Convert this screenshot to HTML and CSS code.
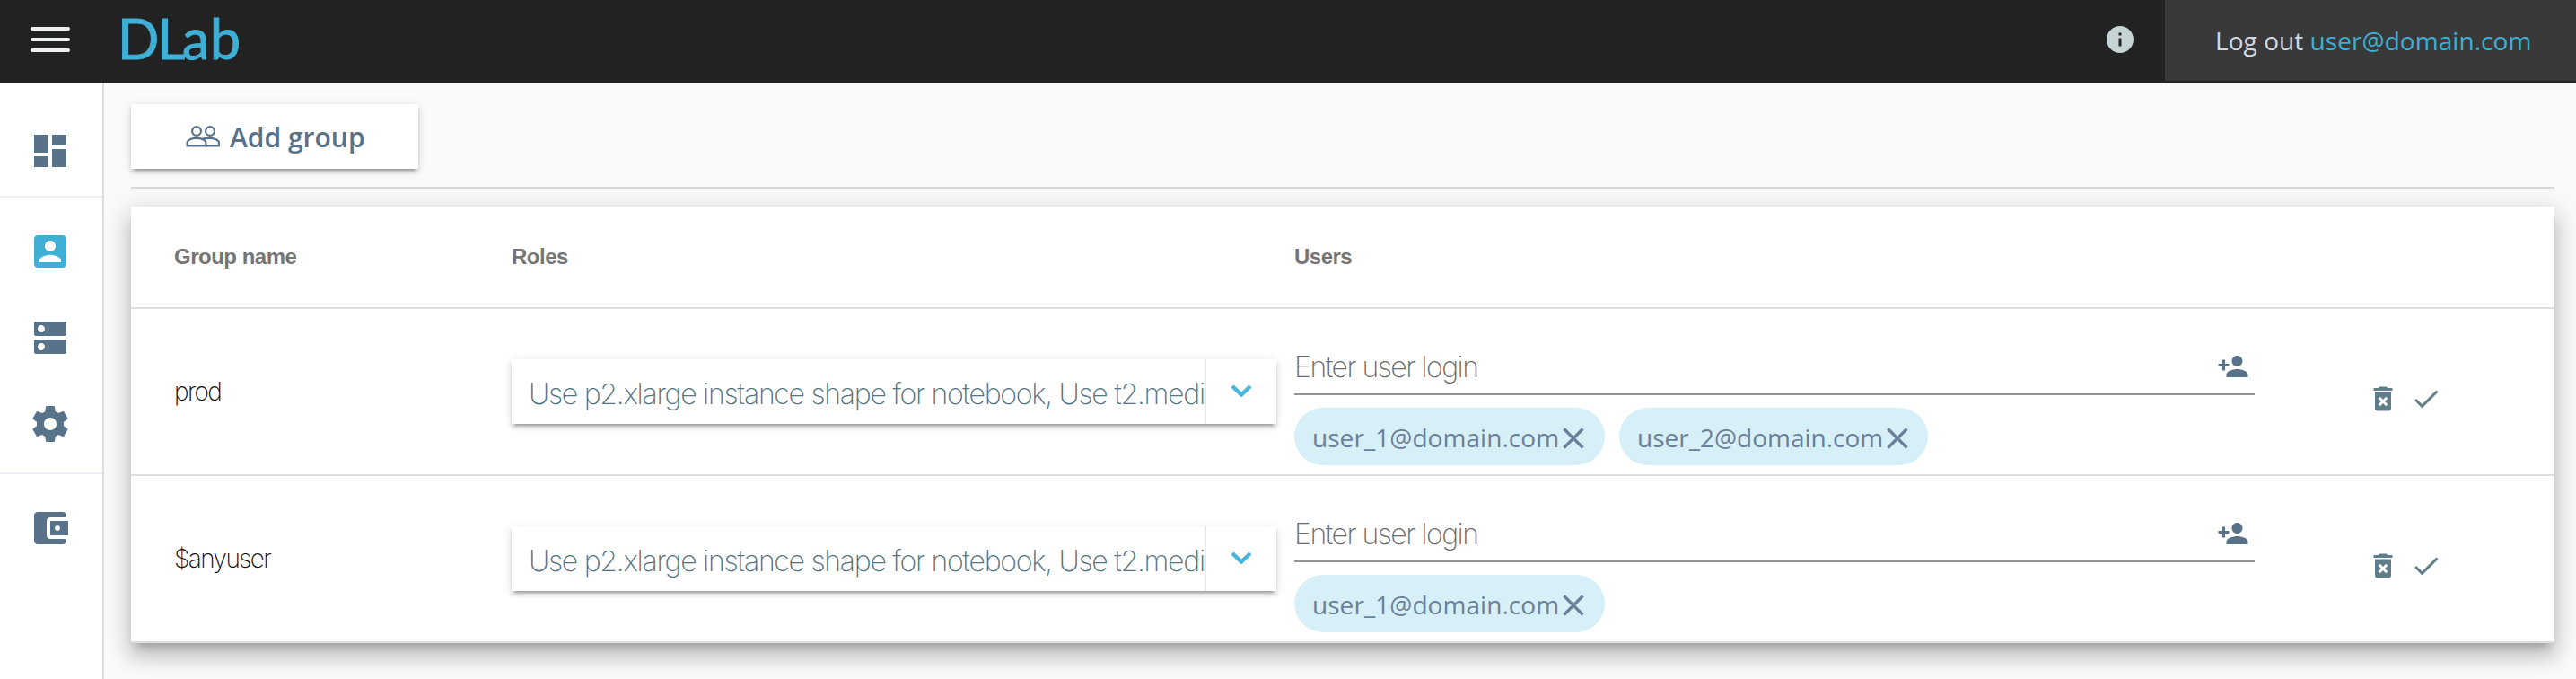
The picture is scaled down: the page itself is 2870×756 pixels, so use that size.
FILE: index.html
```html
<!DOCTYPE html>
<html lang="en">
<head>
<meta charset="utf-8">
<title>DLab</title>
<link rel="stylesheet" href="styles.css">
</head>
<body>
<svg class="sprite" aria-hidden="true">
  <symbol id="close" viewBox="0 0 24 24"><path d="M19 6.41L17.59 5 12 10.59 6.41 5 5 6.41 10.59 12 5 17.59 6.41 19 12 13.41 17.59 19 19 17.59 13.41 12z"/></symbol>
  <symbol id="person-add" viewBox="0 0 24 24"><path d="M15 12c2.21 0 4-1.79 4-4s-1.79-4-4-4-4 1.79-4 4 1.790 4 4 4zm-9-2V7H4v3H1v2h3v3h2v-3h3v-2H6zm9 4c-2.670 0-8 1.340-8 4v2h16v-2c0-2.660-5.330-4-8-4z"/></symbol>
  <symbol id="trash" viewBox="0 0 24 24"><path d="M6 19a2 2 0 0 0 2 2h8a2 2 0 0 0 2-2V7H6zM8.460 11.880l1.410-1.410L12 12.590l2.120-2.120 1.410 1.410L13.410 14l2.120 2.120-1.410 1.410L12 15.410l-2.120 2.120-1.410-1.410L10.590 14zM15.500 4l-1-1h-5l-1 1H5v2h14V4z"/></symbol>
  <symbol id="done" viewBox="0 0 24 24"><path d="M9 16.200L4.800 12l-1.400 1.400L9 19 21 7l-1.400-1.400z"/></symbol>
  <symbol id="chevron" viewBox="0 0 24 14"><path d="M2 2l10 9.500L22 2" fill="none" stroke="currentColor" stroke-width="4.400"/></symbol>
</svg>

<header class="topbar">
  <div class="burger"><i></i><i></i><i></i></div>
  <svg class="logo" width="140" height="60" viewBox="0 0 140 60"><text x="-5 39 67 98" y="52">DLab</text></svg>
  <svg class="info" viewBox="0 0 24 24"><path d="M12 2C6.480 2 2 6.480 2 12s4.480 10 10 10 10-4.480 10-10S17.520 2 12 2zm1 15h-2v-6h2v6zm0-8h-2V7h2v2z"/></svg>
  <div class="logout"><span>Log out <b>user@domain.com</b></span></div>
</header>

<div class="body">
  <nav class="sidebar">
    <div class="nav-group">
      <a><svg viewBox="0 0 24 24"><path d="M3 13h8V3H3v10zm0 8h8v-6H3v6zm10 0h8V11h-8v10zm0-18v6h8V3h-8z"/></svg></a>
    </div>
    <div class="nav-group">
      <a class="active"><svg viewBox="0 0 24 24"><path d="M3 5v14c0 1.100.89 2 2 2h14c1.100 0 2-.9 2-2V5c0-1.100-.9-2-2-2H5c-1.110 0-2 .9-2 2zm12 4c0 1.660-1.340 3-3 3s-3-1.340-3-3 1.340-3 3-3 3 1.340 3 3zm-9 8c0-2 4-3.100 6-3.100s6 1.100 6 3.100v1H6v-1z"/></svg></a>
      <a><svg viewBox="0 0 24 24"><path d="M20 13H4c-.55 0-1 .45-1 1v6c0 .55.45 1 1 1h16c.55 0 1-.45 1-1v-6c0-.55-.45-1-1-1zM7 19c-1.100 0-2-.9-2-2s.9-2 2-2 2 .9 2 2-.9 2-2 2zM20 3H4c-.55 0-1 .45-1 1v6c0 .55.45 1 1 1h16c.55 0 1-.45 1-1V4c0-.55-.45-1-1-1zM7 9c-1.100 0-2-.9-2-2s.9-2 2-2 2 .9 2 2-.9 2-2 2z"/></svg></a>
      <a><svg viewBox="0 0 24 24"><path d="M19.430 12.980c.04-.32.07-.64.07-.98s-.03-.66-.07-.98l2.110-1.650c.19-.15.24-.42.12-.64l-2-3.460c-.12-.22-.39-.3-.61-.22l-2.490 1c-.52-.4-1.080-.73-1.690-.98l-.38-2.650C14.460 2.180 14.250 2 14 2h-4c-.25 0-.46.18-.49.42l-.38 2.650c-.61.25-1.170.59-1.690.98l-2.490-1c-.23-.09-.49 0-.61.22l-2 3.460c-.13.22-.07.49.12.64l2.110 1.650c-.04.32-.07.65-.07.98s.03.66.07.98l-2.110 1.650c-.19.15-.24.42-.12.64l2 3.460c.12.22.39.3.61.22l2.490-1c.52.4 1.080.73 1.690.98l.38 2.650c.03.24.24.42.49.42h4c.25 0 .46-.18.49-.42l.38-2.650c.61-.25 1.170-.59 1.690-.98l2.490 1c.23.09.49 0 .61-.22l2-3.460c.12-.22.07-.49-.12-.64l-2.110-1.650zM12 15.500c-1.930 0-3.500-1.570-3.500-3.500s1.570-3.500 3.500-3.500 3.500 1.570 3.500 3.500-1.570 3.500-3.500 3.500z"/></svg></a>
    </div>
    <div class="nav-group">
      <a><svg viewBox="0 0 24 24"><path d="M21 18v1c0 1.100-.9 2-2 2H5c-1.110 0-2-.9-2-2V5c0-1.100.89-2 2-2h14c1.100 0 2 .9 2 2v1h-9c-1.110 0-2 .9-2 2v8c0 1.100.89 2 2 2h9zm-9-2h10V8H12v8zm4-2.500c-.83 0-1.500-.67-1.500-1.500s.67-1.500 1.500-1.500 1.500.67 1.500 1.500-.67 1.500-1.500 1.500z"/></svg></a>
    </div>
  </nav>

  <main class="content">
    <div class="toolbar">
      <button class="add-group">
        <svg viewBox="0 0 38 26"><g fill="none" stroke="currentColor" stroke-width="2.200"><circle cx="12" cy="7" r="4.900"/><circle cx="27" cy="7" r="4.900"/><path d="M1.600 23.400v-3.600c0-3 5.400-5 10.400-5s10.400 2 10.400 5v3.600z"/><path d="M17.200 16.100c2.600-.9 6.200-1.300 9.300-1.300 5 0 10.400 2 10.400 5v3.600H22"/></g></svg>
        <span>Add group</span>
      </button>
    </div>

    <section class="card">
      <div class="row head"><div>Group name</div><div>Roles</div><div>Users</div></div>

      <div class="row">
        <div class="name">prod</div>
        <div class="select"><span class="value">Use p2.xlarge instance shape for notebook, Use t2.medi</span><span class="toggle"><svg><use href="#chevron"/></svg></span></div>
        <div class="users">
          <div class="field"><span>Enter user login</span><svg><use href="#person-add"/></svg></div>
          <div class="chips">
            <div class="chip"><span>user_1@domain.com</span><svg><use href="#close"/></svg></div>
            <div class="chip"><span>user_2@domain.com</span><svg><use href="#close"/></svg></div>
          </div>
        </div>
        <div class="actions"><svg><use href="#trash"/></svg><svg><use href="#done"/></svg></div>
      </div>

      <div class="row">
        <div class="name">$anyuser</div>
        <div class="select"><span class="value">Use p2.xlarge instance shape for notebook, Use t2.medi</span><span class="toggle"><svg><use href="#chevron"/></svg></span></div>
        <div class="users">
          <div class="field"><span>Enter user login</span><svg><use href="#person-add"/></svg></div>
          <div class="chips">
            <div class="chip"><span>user_1@domain.com</span><svg><use href="#close"/></svg></div>
          </div>
        </div>
        <div class="actions"><svg><use href="#trash"/></svg><svg><use href="#done"/></svg></div>
      </div>
    </section>
  </main>
</div>
</body>
</html>
```
FILE: styles.css
```css
* { box-sizing: border-box; }
body {
  margin: 0;
  height: 756px;
  overflow: hidden;
  display: flex;
  flex-direction: column;
  background: #fafafa;
  font-family: "Open Sans", sans-serif;
}
svg { display: block; fill: currentColor; flex: none; }
.sprite { display: none; }

.topbar {
  height: 92px;
  flex: none;
  display: flex;
  align-items: flex-start;
  background: #222;
  border-bottom: 2px solid #222;
}
.burger { display: flex; flex-direction: column; gap: 8px; padding: 30px 0 0 34px; width: 136px; }
.burger i { width: 44px; height: 4px; border-radius: 2px; background: #eff3f2; }
.logo { margin-top: 14px; overflow: visible; color: #3fafd5; font: 400 61px Lato, sans-serif; stroke: currentColor; stroke-width: 1px; }
.info { width: 36px; height: 36px; margin: 26px 32px 0 auto; color: #c7d4d5; }
.logout {
  width: 458px;
  height: 90px;
  display: flex;
  align-items: center;
  padding: 0 0 0 56px;
  background: #393939;
  color: #cfd9e6;
  font-size: 28px;
  letter-spacing: .05px;
  white-space: nowrap;
}
.logout b { font-weight: 400; color: #3fafd5; }

.body { flex: 1; display: flex; min-height: 0; }
.sidebar { width: 116px; flex: none; background: #fff; border-right: 2px solid #dedede; padding-top: 16px; color: #577289; }
.nav-group { padding-top: 12px; }
.nav-group + .nav-group { border-top: 2px solid #eceff4; }
.nav-group:nth-child(1) { padding-bottom: 2px; }
.nav-group:nth-child(2) { padding-bottom: 6px; }
.nav-group a { height: 96px; display: flex; align-items: center; padding-left: 32px; }
.nav-group svg { width: 48px; height: 48px; }
.nav-group .active { color: #3fafd5; }

.content { flex: 1; padding: 24px 24px 0 30px; overflow: hidden; }
.toolbar { height: 94px; border-bottom: 2px solid #d8d8d8; margin-bottom: 20px; }
.add-group {
  width: 320px;
  height: 72px;
  display: flex;
  align-items: center;
  padding: 0 0 0 61px;
  gap: 11px;
  border: 0;
  background: #fff;
  color: #577289;
  font: 600 30px "Open Sans", sans-serif;
  box-shadow: 0 6px 2px -4px rgba(0,0,0,.2), 0 4px 4px rgba(0,0,0,.14), 0 2px 10px rgba(0,0,0,.12);
}
.add-group svg { width: 38px; height: 26px; }

.card {
  background: #fff;
  box-shadow: 0 10px 10px -6px rgba(0,0,0,.2), 0 16px 20px 2px rgba(0,0,0,.14), 0 6px 28px 4px rgba(0,0,0,.12);
}
.row {
  height: 186px;
  display: grid;
  grid-template-columns: 376px 872px 1070px 1fr;
  padding-left: 48px;
  align-items: center;
  border-bottom: 2px solid #dfdfdf;
}
.row.head { height: 114px; color: #757575; font: 700 24px "Liberation Sans", sans-serif; letter-spacing: -.5px; }
.name { color: #111; font: 200 28px Inter, sans-serif; letter-spacing: -1.6px; }
.select {
  width: 852px;
  height: 72px;
  display: flex;
  background: #fff;
  color: #557482;
  box-shadow: 0 6px 2px -4px rgba(0,0,0,.2), 0 4px 4px rgba(0,0,0,.14), 0 2px 10px rgba(0,0,0,.12);
}
.value { width: 772px; padding-left: 19px; overflow: hidden; white-space: nowrap; font: 200 32px/78px Inter, sans-serif; letter-spacing: -1.28px; }
.toggle { width: 80px; border-left: 2px solid #e8e8e8; padding: 28px 0 0 27px; color: #46b6dc; }
.toggle svg { width: 24px; height: 14px; }
.users { align-self: end; padding-bottom: 10px; }
.field {
  height: 66px;
  display: flex;
  justify-content: space-between;
  align-items: center;
  padding: 3px 6px 0 0;
  border-bottom: 2px solid #949494;
  color: #6c6c6c;
  font: 200 32px Inter, sans-serif;
  letter-spacing: -1.5px;
}
.field span { padding-top: 2px; }
.field svg { width: 36px; height: 36px; color: #577289; }
.chips { display: flex; gap: 16px; margin-top: 14px; }
.chip {
  width: 346px;
  height: 64px;
  display: flex;
  align-items: center;
  padding-left: 20px;
  border-radius: 32px;
  background: #d7eff7;
  color: #6a7f99;
  font-size: 28px;
}
.chip + .chip { width: 344px; }
.chip span { width: 271px; white-space: nowrap; padding-top: 1px; letter-spacing: .05px; }
.chip + .chip span { width: 270px; letter-spacing: 0; }
.chip svg { width: 40px; height: 40px; margin-top: 3px; }
.actions { display: flex; gap: 12px; padding: 15px 0 0 125px; color: #607d8b; }
.actions svg { width: 36px; height: 36px; }
```
